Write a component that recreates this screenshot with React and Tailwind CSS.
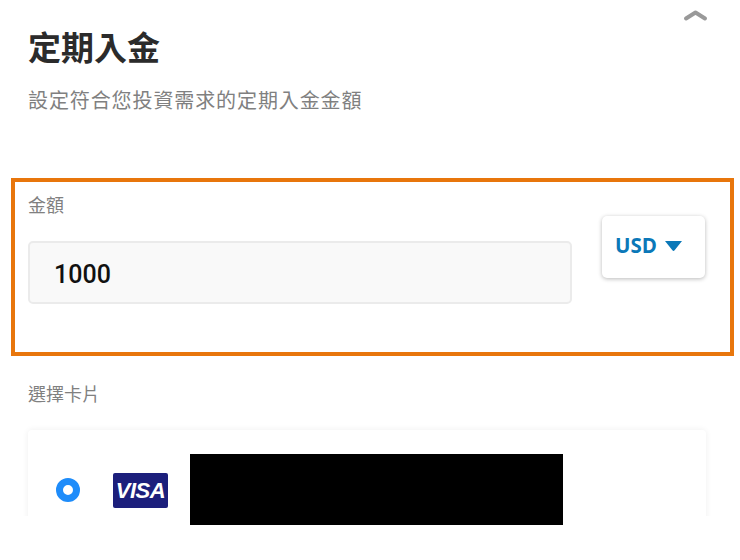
const CJK = "font-['Noto_Sans_CJK_TC','Noto_Sans_CJK_SC',sans-serif]";

export default function App() {
  return (
    <div className={`relative w-[740px] h-[560px] bg-white overflow-hidden ${CJK}`}>
      <div className="h-[516px] overflow-hidden pl-[28px] pr-[35px] pt-[24px]">
        <h1 className="text-[33px] leading-[44px] font-bold text-[#2b2b2b] m-0">定期入金</h1>
        <p className="mt-[17px] text-[20px] leading-[30px] tracking-[0.9px] text-[#808080]">設定符合您投資需求的定期入金金額</p>

        <section className="mt-[63px] -ml-[17px] -mr-[29px] h-[178px] border-[4px] border-[#e8760c] pl-[13px] pr-[25px] flex items-start gap-[30px]">
          <div className="w-[544px] pt-[9px]">
            <div className="text-[18px] leading-[26px] text-[#808080]">金額</div>
            <div className="mt-[24px] h-[63px] rounded-[5px] border-2 border-[#ebebeb] bg-[#f9f9f9] pl-[24px] pt-[5px] flex items-center text-[25px] font-medium text-[#111] font-['Roboto',sans-serif]">1000</div>
          </div>
          <button className="mt-[34px] w-[103px] h-[62px] rounded-[5px] bg-white shadow-[0_1px_4px_rgba(0,0,0,0.28)] flex items-center pl-[13px] pb-[3px] gap-[8px] text-[#0b78b8]">
            <span className="text-[20.5px] font-bold font-['Open_Sans',sans-serif]">USD</span>
            <svg width="17" height="10" viewBox="0 0 17 10" className="mt-[1px]"><path d="M0 0h17l-7.4 9.2a1.4 1.4 0 0 1-2.2 0z" fill="#0b78b8" /></svg>
          </button>
        </section>

        <div className="mt-[24px] text-[18px] leading-[26px] text-[#808080]">選擇卡片</div>

        <div className="mt-[24px] h-[110px] w-[678px] rounded-[4px] bg-white shadow-[0_0_6px_rgba(0,0,0,0.07)] flex items-start pl-[28px] pt-[43px] gap-[33px]">
          <span className="mt-[5px] w-[24px] h-[24px] rounded-full border-[7px] border-[#1e8cfa] bg-white" />
          <div className="w-[55px] h-[35px] rounded-[2px] bg-[#1c1f7c] flex items-center justify-center text-white italic font-bold text-[22px] tracking-[-0.5px] font-['Liberation_Sans',sans-serif]">VISA</div>
        </div>
      </div>

      {/* Collapse chevron, overlapping the panel corner */}
      <svg width="27" height="14" viewBox="0 0 27 14" className="absolute left-[682px] top-[8px]">
        <path d="M4 10.5 L13.5 4.5 L23 10.5" fill="none" stroke="#999" strokeWidth="4" strokeLinecap="round" strokeLinejoin="round" />
      </svg>

      {/* Redaction block lying over the card */}
      <div className="absolute left-[190px] top-[454px] w-[373px] h-[71px] bg-black" />
    </div>
  );
}
